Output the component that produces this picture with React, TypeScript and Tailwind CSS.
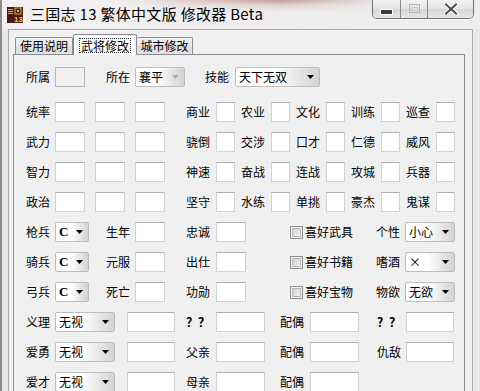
import React from "react";

const FONT = "font-['Noto_Sans_CJK_SC','Noto_Sans',sans-serif]";

function Label({ text, cls = "" }: { text: string; cls?: string }) {
  const q = text === "？？";
  return (
    <span
      className={`w-[24px] shrink-0 whitespace-nowrap text-[12px] leading-[20px] text-black ${q ? "font-bold" : ""} ${cls}`}
    >
      {text}
    </span>
  );
}

function Box({ cls }: { cls: string }) {
  return (
    <div className={`h-[20px] shrink-0 bg-white border border-[#cfd3d9] border-t-[#abadb3] ${cls}`} />
  );
}

function Combo({
  cls,
  text,
  disabled = false,
  bold = false,
}: {
  cls: string;
  text: string;
  disabled?: boolean;
  bold?: boolean;
}) {
  return (
    <div
      className={`h-[20px] shrink-0 flex items-center border border-[#bdbdbd] rounded-[2px] bg-[linear-gradient(to_right,#ffffff_45%,#d4d2d2)] ${cls}`}
    >
      <span
        className={`flex-1 pl-[3px] text-[12px] leading-[18px] whitespace-nowrap ${
          bold ? "font-bold font-['Liberation_Serif',serif] text-[13px]" : ""
        } text-black`}
      >
        {text}
      </span>
      <svg width="7" height="4" className="mr-[5px] shrink-0">
        <path d="M0 0H7L3.5 4Z" fill={disabled ? "#a8a8a8" : "#000"} />
      </svg>
    </div>
  );
}

function Check({ cls, text }: { cls: string; text: string }) {
  return (
    <div className={`flex items-center shrink-0 ${cls}`}>
      <div className="w-[13px] h-[13px] border border-[#8f8f8f] bg-[#f4f4f4] p-[1px]">
        <div className="w-full h-full border border-[#b8b8b8] bg-[linear-gradient(135deg,#d0d0d0,#f4f4f4)]" />
      </div>
      <span className="ml-[2px] text-[12px] leading-[20px] whitespace-nowrap">{text}</span>
    </div>
  );
}

function AppIcon() {
  return (
    <svg width="16" height="16" viewBox="0 0 16 16" className="shrink-0">
      <rect width="16" height="16" fill="#4a1c12" />
      <rect x="1" y="2" width="5" height="1" fill="#e0b040" />
      <rect x="1" y="4" width="5" height="1" fill="#e0b040" />
      <rect x="1" y="6" width="5" height="1" fill="#e0b040" />
      <rect x="8" y="1" width="6" height="6" fill="none" stroke="#e0b040" strokeWidth="1" />
      <rect x="10" y="3" width="2" height="2" fill="#e0b040" />
      <text x="7" y="15" fontSize="8" fontWeight="bold" fill="#f0c050" fontFamily="Liberation Sans, sans-serif">
        13
      </text>
    </svg>
  );
}

function CaptionButtons() {
  return (
    <div className="flex h-[19px] shrink-0 border border-t-0 border-[#6f6f6f] rounded-b-[5px] overflow-hidden shadow-[0_1px_0_rgba(255,255,255,0.7)]">
      <div className="w-[28px] h-full flex items-center justify-center bg-[linear-gradient(to_bottom,#f4f4f4,#e4e4e4_50%,#d6d6d6_51%,#e6e6e6)] border-r border-[#8a8a8a]">
        <svg width="13" height="6" className="mt-[6px]">
          <rect x="0.5" y="0.5" width="12" height="5" fill="#3c3c3c" stroke="#ffffff" />
        </svg>
      </div>
      <div className="w-[27px] h-full flex items-center justify-center bg-[linear-gradient(to_bottom,#f4f4f4,#e4e4e4_50%,#d6d6d6_51%,#e6e6e6)] border-r border-[#8a8a8a]">
        <svg width="11" height="9" className="mt-[-1px]">
          <rect x="0.5" y="0.5" width="10" height="8" fill="none" stroke="#b4b4b4" />
          <rect x="2.5" y="3.5" width="6" height="3" fill="none" stroke="#c8c8c8" />
        </svg>
      </div>
      <div className="w-[45px] h-full flex items-center justify-center bg-[linear-gradient(to_bottom,#f4f4f4,#e4e4e4_50%,#d6d6d6_51%,#e6e6e6)]">
        <svg width="14" height="12" className="mt-[-1px]">
          <path d="M2 1.5L12 10.5M12 1.5L2 10.5" stroke="#ffffff" strokeWidth="4" strokeLinecap="square" />
          <path d="M2 1.5L12 10.5M12 1.5L2 10.5" stroke="#4a4a4a" strokeWidth="2" strokeLinecap="square" />
        </svg>
      </div>
    </div>
  );
}

export default function App() {
  return (
    <div
      className={`w-[480px] h-[391px] overflow-hidden ${FONT} text-black bg-[#e9e9e9] border-l-[2px] border-[#8c8c8c]`}
    >
      {/* title bar */}
      <div className="h-[29px] bg-linear-to-b from-[#c39a9a] via-[#e2d4d4] via-[20%] to-[#efeded] to-[45%]">
        <div className="flex items-start h-[29px] bg-linear-to-r from-[#f1efef] from-[25%] via-transparent via-[58%] to-[#eeeeee] to-[82%]">
          <div className="ml-[5px] mt-[7px]">
            <AppIcon />
          </div>
          <span className="ml-[7px] mt-[4px] text-[15px] leading-[20px] tracking-[0.3px] whitespace-nowrap text-black">
            三国志 13 繁体中文版 修改器 Beta
          </span>
          <div className="ml-auto mr-[6px]">
            <CaptionButtons />
          </div>
        </div>
      </div>

      {/* client area */}
      <div className="ml-[6px] mr-[7px] h-[400px] border-l border-t border-r border-[#a9a9a9] bg-[#f0f0f0] pl-[4px] pt-[4px]">
        {/* tabs */}
        <div className="flex items-end h-[20px] relative z-10">
          <div className="ml-[2px] w-[58px] h-[17px] border border-b-0 border-[#898c95] rounded-t-[2px] bg-[linear-gradient(to_bottom,#f3f3f3,#e8e8e8_50%,#dddddd_51%,#e3e3e3)] flex items-center justify-center text-[12px] leading-none">
            使用说明
          </div>
          <div className="w-[64px] h-[21px] mb-[-1px] border border-b-0 border-[#898c95] rounded-t-[2px] bg-[#fbfbfb] flex items-center justify-center">
            <span className="px-[1px] border border-dotted border-[#333] text-[12px] leading-[13px]">武将修改</span>
          </div>
          <div className="w-[56px] h-[17px] border border-b-0 border-l-0 border-[#898c95] rounded-t-[2px] bg-[linear-gradient(to_bottom,#f3f3f3,#e8e8e8_50%,#dddddd_51%,#e3e3e3)] flex items-center justify-center text-[12px] leading-none">
            城市修改
          </div>
        </div>

        {/* panel */}
        <div className="w-[452px] h-[400px] border border-[#898c95] bg-[#f0f0f0] pl-[12px] pt-[12px] flex flex-col">
          {/* row 0 */}
          <div className="flex items-center h-[20px]">
            <Label text="所属" />
            <div className="ml-[5px] w-[30px] h-[20px] border border-[#b3b6bb] bg-[#f0f0f0]" />
            <Label text="所在" cls="ml-[21px]" />
            <Combo cls="ml-[5px] w-[50px]" text="襄平" disabled />
            <Label text="技能" cls="ml-[20px]" />
            <Combo cls="ml-[6px] w-[85px]" text="天下无双" />
          </div>

          {/* stat rows */}
          <div className="flex flex-col gap-[10px] mt-[15px]">
            {[
              ["统率", "商业", "农业", "文化", "训练", "巡查"],
              ["武力", "骁倒", "交涉", "口才", "仁德", "威风"],
              ["智力", "神速", "奋战", "连战", "攻城", "兵器"],
              ["政治", "坚守", "水练", "单挑", "豪杰", "鬼谋"],
            ].map((r) => (
              <div key={r[0]} className="flex items-center h-[20px]">
                <Label text={r[0]} />
                <Box cls="ml-[5px] w-[30px]" />
                <Box cls="ml-[10px] w-[30px]" />
                <Box cls="ml-[10px] w-[30px]" />
                <Label text={r[1]} cls="ml-[21px]" />
                <Box cls="ml-[6px] w-[19px]" />
                <Label text={r[2]} cls="ml-[6px]" />
                <Box cls="ml-[6px] w-[19px]" />
                <Label text={r[3]} cls="ml-[6px]" />
                <Box cls="ml-[6px] w-[19px]" />
                <Label text={r[4]} cls="ml-[6px]" />
                <Box cls="ml-[6px] w-[19px]" />
                <Label text={r[5]} cls="ml-[6px]" />
                <Box cls="ml-[6px] w-[19px]" />
              </div>
            ))}

            {[
              ["枪兵", "生年", "忠诚", "喜好武具", "个性", "小心"],
              ["骑兵", "元服", "出仕", "喜好书籍", "嗜酒", "×"],
              ["弓兵", "死亡", "功勋", "喜好宝物", "物欲", "无欲"],
            ].map((r) => (
              <div key={r[0]} className="flex items-center h-[20px]">
                <Label text={r[0]} />
                <Combo cls="ml-[5px] w-[34px]" text="C" bold />
                <Label text={r[1]} cls="ml-[17px]" />
                <Box cls="ml-[5px] w-[30px]" />
                <Label text={r[2]} cls="ml-[21px]" />
                <Box cls="ml-[6px] w-[30px]" />
                <Check cls="ml-[44px] w-[63px]" text={r[3]} />
                <Label text={r[4]} cls="ml-[23px]" />
                <Combo cls="ml-[5px] w-[50px]" text={r[5]} />
              </div>
            ))}

            {[
              ["义理", "？？", "配偶", "？？"],
              ["爱勇", "父亲", "配偶", "仇敌"],
              ["爱才", "母亲", "配偶", ""],
            ].map((r) => (
              <div key={r[0]} className="flex items-center h-[20px]">
                <Label text={r[0]} />
                <Combo cls="ml-[5px] w-[60px]" text="无视" />
                <Box cls="ml-[12px] w-[48px]" />
                <Label text={r[1]} cls="ml-[11px]" />
                <Box cls="ml-[6px] w-[49px]" />
                <Label text={r[2]} cls="ml-[15px]" />
                <Box cls="ml-[6px] w-[49px]" />
                {r[3] !== "" && (
                  <>
                    <Label text={r[3]} cls="ml-[18px]" />
                    <Box cls="ml-[5px] w-[48px]" />
                  </>
                )}
              </div>
            ))}
          </div>
        </div>
      </div>
    </div>
  );
}
